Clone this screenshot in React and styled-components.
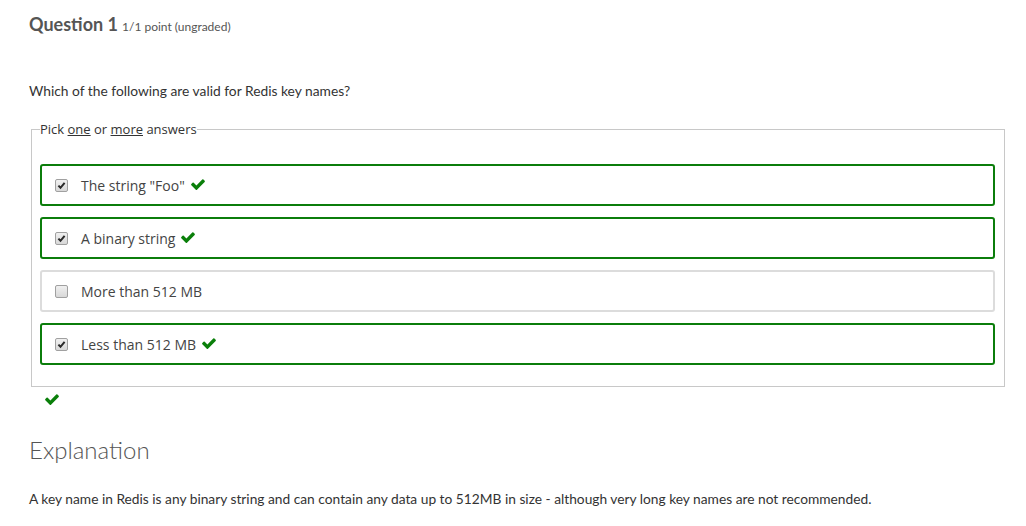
import React from 'react';
import styled, { createGlobalStyle } from 'styled-components';

const GlobalStyle = createGlobalStyle`
    body {
        margin: 0;
        background: #fff;
        font-family: Lato, "Open Sans", sans-serif;
        color: #333;
    }
`;

const Page = styled.div`
    padding: 10px 21px 0 29px;
`;

const Title = styled.h3`
    margin: 0;
    font-size: 18px;
    font-weight: 700;
    color: #555;
    line-height: 28px;
`;

const Points = styled.span`
    font-size: 12px;
    font-weight: 400;
    margin-left: 4px;
`;

const Prompt = styled.p`
    margin: 40px 0 0;
    font-size: 13.8px;
    line-height: 20px;
`;

const Fieldset = styled.fieldset`
    margin: 19px 0 0 2px;
    padding: 26px 9px 21px 8px;
    border: 1px solid #c8c8c8;
    display: flex;
    flex-direction: column;
    gap: 11px;
`;

const Legend = styled.legend`
    font-family: "Open Sans", sans-serif;
    font-size: 13px;
    color: #333;
    padding: 0;

    u {
        text-decoration: underline;
    }
`;

const Option = styled.label`
    box-sizing: border-box;
    display: flex;
    align-items: center;
    height: 42px;
    padding: 0 13px;
    border: 2px solid ${p => (p.$correct ? '#0b7d0b' : '#dcdcdc')};
    border-radius: 3px;
    font-family: "Open Sans", sans-serif;
    font-size: 14px;
    color: #444;
`;

const Box = styled.span`
    width: 11px;
    height: 11px;
    border: 1px solid #a0a0a0;
    border-radius: 2px;
    background: linear-gradient(#f0f0f0, #d8d8d8);
    display: inline-flex;
    align-items: center;
    justify-content: center;
    margin-right: 13px;
    flex-shrink: 0;
`;

const TickSvg = styled.svg`
    margin-left: ${p => (p.$inline ? 5 : 0)}px;
    flex-shrink: 0;
`;

const Result = styled.div`
    padding: 4px 0 0 15px;
    height: 19px;
`;

const Heading = styled.h2`
    margin: 25px 0 0;
    font-size: 24px;
    font-weight: 300;
    color: #555;
    line-height: 30px;
`;

const Body = styled.p`
    margin: 24px 0 0;
    font-size: 13.75px;
    line-height: 20px;
`;

const answers = [
    { text: 'The string "Foo"', checked: true },
    { text: 'A binary string', checked: true },
    { text: 'More than 512 MB', checked: false },
    { text: 'Less than 512 MB', checked: true },
];

// font-awesome 4 style check
const Tick = ({ inline }) => (
    <TickSvg $inline={inline} width="16" height="13" viewBox="0 390 1792 1280">
        <path
            fill="#0a7f0a"
            d="M1671 566q0 40-28 68l-724 724-136 136q-28 28-68 28t-68-28l-136-136-362-362q-28-28-28-68t28-68l136-136q28-28 68-28t68 28l294 295 656-657q28-28 68-28t68 28l136 136q28 28 28 68z"
        />
    </TickSvg>
);

const CheckBox = ({ checked }) => (
    <Box>
        {checked && (
            <svg width="9" height="9" viewBox="0 0 9 9">
                <path d="M1.4 4.6 L3.5 6.8 L7.6 1.8" fill="none" stroke="#2a2a2a" strokeWidth="2" />
            </svg>
        )}
    </Box>
);

const App = () => (
    <Page>
        <GlobalStyle />
        <Title>
            Question 1<Points>1/1 point (ungraded)</Points>
        </Title>
        <Prompt>Which of the following are valid for Redis key names?</Prompt>
        <Fieldset>
            <Legend>
                Pick <u>one</u> or <u>more</u> answers
            </Legend>
            {answers.map(a => (
                <Option key={a.text} $correct={a.checked}>
                    <CheckBox checked={a.checked} />
                    {a.text}
                    {a.checked && <Tick inline />}
                </Option>
            ))}
        </Fieldset>
        <Result>
            <Tick />
        </Result>
        <Heading>Explanation</Heading>
        <Body>
            A key name in Redis is any binary string and can contain any data up to 512MB in size - although very long key names are not recommended.
        </Body>
    </Page>
);

export default App;
